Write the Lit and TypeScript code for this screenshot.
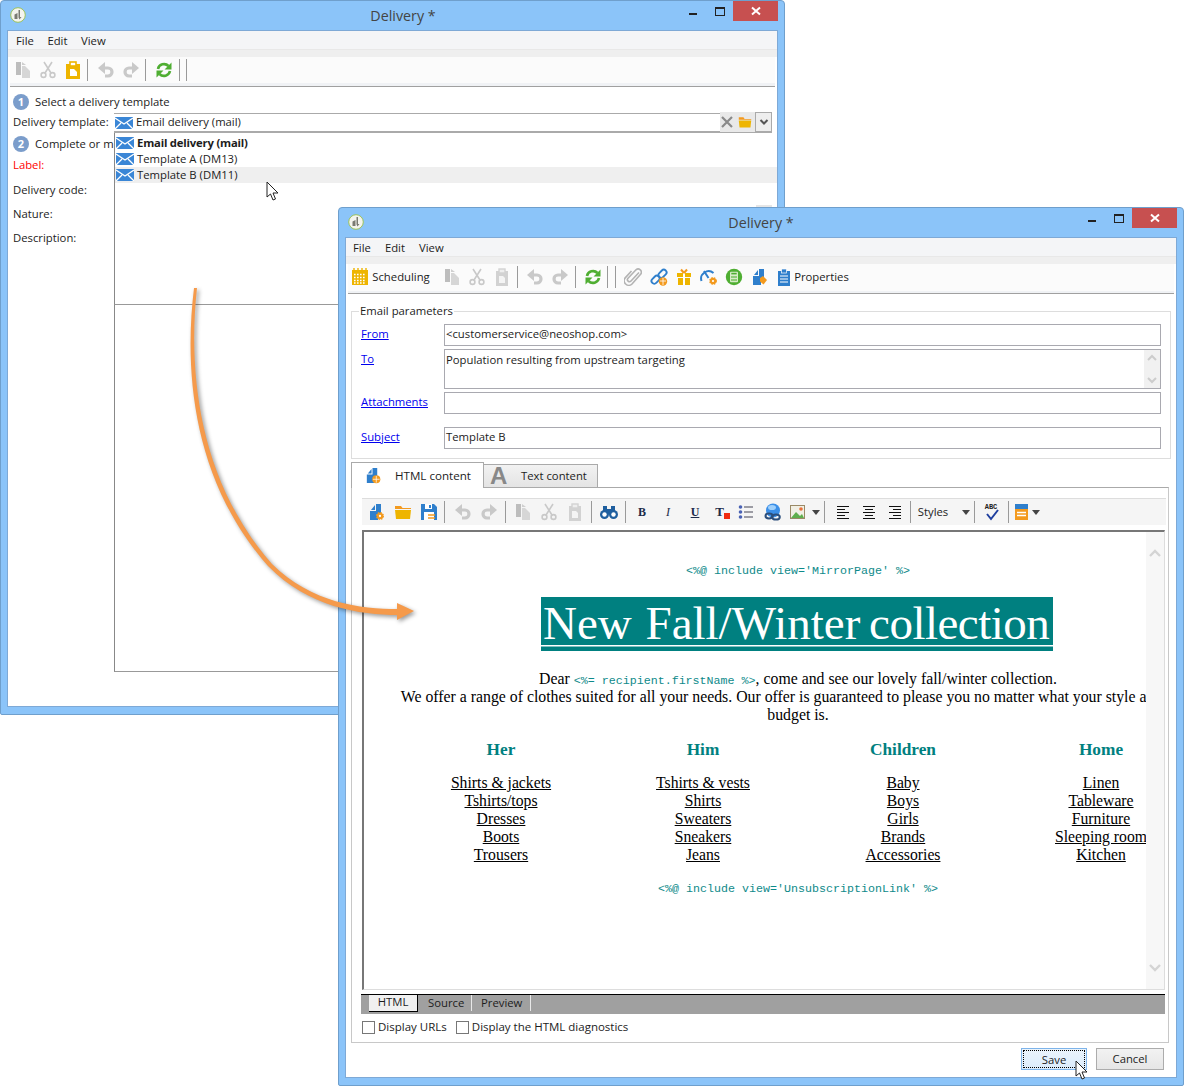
import { LitElement, html, svg, css } from 'lit';
import { customElement } from 'lit/decorators.js';

const BLUE = '#2f7fcc';
const ORANGE = '#f39a1e';
const YELLOW = '#eeb500';
const DIS = '#c9c9c9';

const gear = (x: number, y: number, r: number) => svg`
  <circle cx=${x} cy=${y} r=${r} fill=${ORANGE} stroke=${ORANGE} stroke-width="1.4" stroke-dasharray="1.4 1.2"/>
  <circle cx=${x} cy=${y} r=${r * 0.35} fill="#fff"/>`;
const docBlue = svg`<path d="M4 7l4-5v5zM9 1h5v10h-3v6H3V8h6z" fill=${BLUE}/>`;

const ICONS: Record<string, unknown> = {
  copy: svg`<path d="M2 1h5v13H2z" fill="#bdbdbd"/><path d="M8 5h3l5 5v7H8z" fill="#d6d6d6"/><path d="M8 1l4 3H8z" fill="#cfcfcf"/>`,
  cut: svg`<g fill="none" stroke=${DIS} stroke-width="1.6"><circle cx="4.5" cy="14" r="2.4"/><circle cx="13.5" cy="14" r="2.4"/><path d="M6 12L13 1M12 12L5 1"/></g>`,
  paste: svg`<rect x="2" y="3" width="14" height="15" fill=${YELLOW}/><rect x="6" y="1" width="6" height="4" fill="#fff" stroke=${YELLOW} stroke-width="1.6"/><path d="M6 8h4l3 3v4H6z" fill="#fff"/>`,
  pasteOff: svg`<rect x="3" y="3" width="12" height="15" fill="#d2d2d2"/><rect x="6" y="1" width="6" height="4" fill="#eee" stroke="#d2d2d2" stroke-width="1.4"/><path d="M6 8h4l2 2v5H6z" fill="#f4f4f4"/>`,
  undo: svg`<path d="M4 7h7a4 4 0 0 1 0 8H8" fill="none" stroke=${DIS} stroke-width="3.2"/><path d="M8 1L1 7L8 13z" fill=${DIS}/>`,
  redo: svg`<g transform="matrix(-1 0 0 1 18 0)"><path d="M4 7h7a4 4 0 0 1 0 8H8" fill="none" stroke=${DIS} stroke-width="3.2"/><path d="M8 1L1 7L8 13z" fill=${DIS}/></g>`,
  refresh: svg`<g fill="none" stroke="#4fae32" stroke-width="2.6"><path d="M3 8a6.2 6.2 0 0 1 10.5-3"/><path d="M15 10a6.2 6.2 0 0 1-10.5 3"/></g><path d="M16.5 1.5v7h-7zM1.5 16.5v-7h7z" fill="#4fae32"/>`,
  cal: svg`<rect x="1" y="2" width="16" height="15" fill=${YELLOW}/><path d="M3 0v4M7 0v4M11 0v4M15 0v4" stroke=${YELLOW} stroke-width="1.4"/><path d="M3 6.5h12M3 9.5h12M3 12.5h12M3 15h12" stroke="#fff" stroke-width="1.5" stroke-dasharray="1.6 1.4"/>`,
  clip: svg`<path d="M15 4.5L7 13a2 2 0 0 1-3-2.8l8-8.4a3.2 3.2 0 0 1 4.6 4.4L8 16a4.6 4.6 0 0 1-6.6-6.4L7.5 3" fill="none" stroke="#b3b3b3" stroke-width="1.6"/>`,
  link: svg`<g fill="none" stroke=${BLUE} stroke-width="1.9"><rect x="1" y="9" width="9" height="5.5" rx="2.7" transform="rotate(-45 5.5 11.7)"/><rect x="8" y="3" width="9" height="5.5" rx="2.7" transform="rotate(-45 12.5 5.7)"/></g><circle cx="13" cy="13.5" r="4.2" fill=${ORANGE}/><path d="M10 13h6M13 10v7" stroke="#fff" stroke-width=".8"/>`,
  gift: svg`<rect x="2" y="5" width="14" height="4" fill=${YELLOW}/><rect x="3" y="10" width="12" height="7" fill=${YELLOW}/><rect x="8" y="5" width="2" height="12" fill="#fff"/><path d="M9 5L6 1.5M9 5l3-3.5" stroke=${ORANGE} stroke-width="2"/>`,
  gauge: svg`<path d="M1.500 13a7.500 7.500 0 0 1 12-8" fill="none" stroke=${BLUE} stroke-width="2"/><path d="M4 3l4.500 7" stroke=${BLUE} stroke-width="2"/>${gear(13, 13, 3.2)}`,
  calc: svg`<circle cx="9" cy="9" r="8.2" fill="#4fae32"/><rect x="5" y="3.8" width="8" height="10.4" rx="1" fill="#d8ecc8"/><path d="M6.3 5.6h5.4" stroke="#4fae32" stroke-width="1.6"/><path d="M6.3 9h5.4M6.3 12h5.4" stroke="#4fae32" stroke-width="1.4" stroke-dasharray="1.4 .6"/>`,
  docTag: svg`${docBlue}<path d="M10 10l3-2 4 4-3.500 4.500-3.500-3z" fill=${ORANGE}/>`,
  props: svg`<rect x="3" y="3" width="12" height="15" fill=${BLUE}/><rect x="6.500" y="1" width="5" height="4" fill=${BLUE} stroke="#fff" stroke-width=".7"/><path d="M5 8h8M5 11h8M5 14h8" stroke="#fff" stroke-width="1.2"/>`,
  docGear: svg`${docBlue}${gear(13, 13, 3.3)}`,
  docGlobe: svg`${docBlue}<circle cx="13" cy="13" r="4.3" fill=${ORANGE}/><path d="M9.500 13h7M13 9.500v7" stroke="#fff" stroke-width=".8"/>`,
  folder: svg`<path d="M1 3h6l1.500 2H17v1H1z" fill=${ORANGE}/><path d="M1 7h16l-1 9H2z" fill=${YELLOW}/>`,
  save: svg`<path d="M1 1h13l3 3v13H1z" fill=${BLUE}/><rect x="5" y="1" width="7" height="5" fill="#fff"/><rect x="9" y="2" width="2" height="3" fill=${BLUE}/><rect x="4" y="9" width="10" height="8" fill="#fff"/><path d="M8 12h7M8 15h7" stroke=${ORANGE} stroke-width="1.6"/>`,
  binoc: svg`<g fill="#1f5f9f"><circle cx="4.500" cy="11.500" r="4.500"/><circle cx="13.500" cy="11.500" r="4.500"/><path d="M3 3h4v6H3zM11 3h4v6h-4zM7 6h4v5H7z"/></g><circle cx="4.500" cy="11.500" r="2.200" fill="#fff"/><circle cx="13.500" cy="11.500" r="2.200" fill="#fff"/>`,
  list: svg`<g fill="#4a62b4"><circle cx="3.500" cy="4" r="1.800"/><circle cx="3.500" cy="9" r="1.800"/><circle cx="3.500" cy="14" r="1.800"/></g><path d="M7 4h9M7 9h9M7 14h9" stroke="#445" stroke-width="1.200"/>`,
  globe: svg`<circle cx="9" cy="7.500" r="7" fill="#3b8fe8"/><ellipse cx="8" cy="4.500" rx="4" ry="2.500" fill="#9fd0fb"/><g fill="none" stroke="#2c4f7c" stroke-width="2"><ellipse cx="5" cy="13" rx="3.500" ry="2.400"/><ellipse cx="12" cy="14" rx="3.800" ry="2.600"/></g>`,
  image: svg`<rect x="1.500" y="2.500" width="14" height="13" fill="#f1efe4" stroke="#9a8a66"/><path d="M2 15l5-6 4 4 2-2 2 4z" fill="#5fae4c"/><circle cx="12" cy="6" r="1.800" fill="#e8703a"/>`,
  alignL: svg`<path d="M3 3.500h12M3 6.500h8M3 9.500h12M3 12.500h8M3 15.500h12" stroke="#111" stroke-width="1"/>`,
  alignC: svg`<path d="M3 3.500h12M5 6.500h8M3 9.500h12M5 12.500h8M3 15.500h12" stroke="#111" stroke-width="1"/>`,
  alignR: svg`<path d="M3 3.500h12M7 6.500h8M3 9.500h12M7 12.500h8M3 15.500h12" stroke="#111" stroke-width="1"/>`,
  check: svg`<path d="M5 11l4 5 7-9" fill="none" stroke="#1f3f9f" stroke-width="2"/>`,
  block: svg`<rect x="1" y="1" width="13" height="5" fill=${BLUE}/><rect x="1" y="6" width="13" height="11" fill=${ORANGE}/><path d="M3 9.500h9M3 12.500h9" stroke="#fff" stroke-width="1.300"/>`,
};

type Item = [string, number, number?];

const LINKS = [
  { title: 'Her', items: ['Shirts & jackets', 'Tshirts/tops', 'Dresses', 'Boots', 'Trousers'] },
  { title: 'Him', items: ['Tshirts & vests', 'Shirts', 'Sweaters', 'Sneakers', 'Jeans'] },
  { title: 'Children', items: ['Baby', 'Boys', 'Girls', 'Brands', 'Accessories'] },
  { title: 'Home', items: ['Linen', 'Tableware', 'Furniture', 'Sleeping room', 'Kitchen'] },
];

const TOOLBAR_1: Item[] = [
  ['copy', 23], ['cut', 48], ['paste', 73], ['sep', 87], ['undo', 106], ['redo', 131],
  ['sep', 145], ['refresh', 164], ['sep', 179], ['sep', 186],
];
const TOOLBAR_2: Item[] = [
  ['cal', 360], ['t:Scheduling', 401, 62], ['copy', 452], ['cut', 477], ['pasteOff', 502], ['sep', 517],
  ['undo', 535], ['redo', 560], ['sep', 575], ['refresh', 593], ['sep', 607], ['sep', 615],
  ['clip', 633], ['link', 659], ['gift', 684], ['gauge', 709], ['calc', 734], ['docTag', 759], ['props', 784],
  ['t:Properties', 821.500, 56],
];
const TOOLBAR_3: Item[] = [
  ['docGear', 376], ['folder', 403], ['save', 429], ['sep', 444], ['undo', 463], ['redo', 489], ['sep', 505],
  ['copy', 523], ['cut', 549], ['pasteOff', 575], ['sep', 591], ['binoc', 609], ['sep', 625],
  ['b:B', 642], ['i:I', 668], ['u:U', 695], ['r:T', 721], ['list', 746], ['globe', 773], ['image', 798],
  ['arrow', 816, 9], ['sep', 824], ['alignL', 843], ['alignC', 869], ['alignR', 895], ['sep', 910],
  ['t:Styles', 933, 32], ['arrow', 966, 9], ['sep', 974], ['a:ABC', 991], ['sep', 1008], ['block', 1023], ['arrow', 1036, 9],
];

@customElement('app-root')
export class AppRoot extends LitElement {
  // toolbar items sit on known centres, so the gap before each is worked out from the data
  private bar(start: number, items: Item[]) {
    let edge = start;
    return items.map(([key, centre, width]) => {
      const w = key === 'sep' ? 1 : width ?? 18;
      const gap = centre - w / 2 - edge;
      edge = centre + w / 2;
      const [kind, label] = key.split(':');
      let body: unknown;
      if (key === 'sep') body = html`<i class="sep"></i>`;
      else if (key === 'arrow') body = html`<i class="tri"></i>`;
      else if (label && kind === 't') body = html`<span class="tool-text">${label}</span>`;
      else if (label && kind === 'a') body = html`<span class="abc">${label}</span><svg class="ic" viewBox="0 0 18 18" width="18" height="18">${ICONS.check}</svg>`;
      else if (label) body = html`<span class="fmt ${kind}">${label}</span>`;
      else body = this.icon(key);
      return html`<span class="tool" style="margin-left:${gap}px;width:${w}px">${body}</span>`;
    });
  }

  private icon(name: string, size = 18) {
    return html`<svg class="ic" viewBox="0 0 18 18" width=${size} height=${size}>${ICONS[name]}</svg>`;
  }

  private logo() {
    return html`<svg class="logo" viewBox="0 0 16 16" width="16" height="16">
      <circle cx="8" cy="8" r="7.300" fill="#f4f4ee" stroke="#9cc25a"/>
      <path d="M4.500 12V7.500l3-1.500v6zM8.500 3H10v7h1.500L9.500 12.500l-1-2z" fill="#7a7a72"/>
    </svg>`;
  }

  private mail() {
    return html`<svg class="mail" viewBox="0 0 18 12" width="18" height="12">
      <rect width="18" height="12" fill="#3a86d6"/>
      <path d="M0 1l9 6 9-6M0 12l6-6M18 12l-6-6" fill="none" stroke="#fff" stroke-width="1.300"/>
    </svg>`;
  }

  private caption() {
    return html`<header class="title">
      ${this.logo()}
      <span class="caption">Delivery *</span>
      <span class="min"></span><span class="max"></span>
      <span class="close"><svg viewBox="0 0 10 10" width="10" height="10"><path d="M1 1.500l8 7M9 1.500l-8 7" stroke="#fff" stroke-width="2"/></svg></span>
    </header>`;
  }

  private menu() {
    return html`<nav class="menu"><span>File</span><span>Edit</span><span>View</span></nav><div class="stripe"></div>`;
  }

  private cursor(cls: string) {
    return html`<svg class="cursor ${cls}" viewBox="0 0 13 20" width="13" height="20">
      <path d="M1 1v15l3.500-3 2.500 6 2.500-1-2.500-6h5z" fill="#fff" stroke="#222" stroke-width="1"/>
    </svg>`;
  }

  private firstWindow() {
    return html`<section class="win first">
      ${this.caption()}
      <div class="client">
        ${this.menu()}
        <div class="toolbar">${this.bar(10, TOOLBAR_1)}</div>
        <div class="rule"></div>
        <div class="body">
          <div class="step"><b>1</b>Select a delivery template</div>
          <div class="tpl-row">
            <label>Delivery template:</label>
            <div class="combo">
              ${this.mail()}<span class="combo-text">Email delivery (mail)</span>
              <span class="combo-tools">
                <svg viewBox="0 0 14 14" width="14" height="14"><path d="M2 2l10 10M12 2L2 12" stroke="#8a8a8a" stroke-width="2.200"/></svg>
                ${this.icon('folder', 14)}
              </span>
              <span class="combo-btn"><svg viewBox="0 0 10 8" width="10" height="8"><path d="M1.500 2l3.500 3.500L8.500 2" fill="none" stroke="#555" stroke-width="2"/></svg></span>
            </div>
          </div>
          <div class="step second"><b>2</b>Complete or m</div>
          <div class="lbl red">Label:</div>
          <div class="lbl code">Delivery code:</div>
          <div class="lbl next">Nature:</div>
          <div class="lbl next">Description:</div>
          <div class="drop">
            <div class="opt strong">${this.mail()}Email delivery (mail)</div>
            <div class="opt">${this.mail()}Template A (DM13)</div>
            <div class="opt hover">${this.mail()}Template B (DM11)</div>
          </div>
          <div class="pane"></div>
        </div>
      </div>
    </section>`;
  }

  private secondWindow() {
    return html`<section class="win second-win">
      ${this.caption()}
      <div class="client">
        ${this.menu()}
        <div class="toolbar tall">${this.bar(348, TOOLBAR_2)}</div>
        <div class="rule"></div>
        <div class="sheet">
          <fieldset class="params">
            <legend>Email parameters</legend>
            <div class="field from"><a>From</a><div class="input">&lt;customerservice@neoshop.com&gt;</div></div>
            <div class="field to"><a>To</a><div class="input area">Population resulting from upstream targeting
              <span class="mini-scroll">
                <svg viewBox="0 0 12 8" width="12" height="8"><path d="M2 6l4-4 4 4" fill="none" stroke="#ccc" stroke-width="2"/></svg>
                <svg viewBox="0 0 12 8" width="12" height="8"><path d="M2 2l4 4 4-4" fill="none" stroke="#ccc" stroke-width="2"/></svg>
              </span></div></div>
            <div class="field attach"><a>Attachments</a><div class="input"></div></div>
            <div class="field subject"><a>Subject</a><div class="input">Template B</div></div>
          </fieldset>
          <div class="tabs">
            <div class="tab on">${this.icon('docGlobe', 17)}<span>HTML content</span></div>
            <div class="tab off"><span class="big-a">A</span><span>Text content</span></div>
          </div>
          <div class="panel">
            <div class="edit-bar">${this.bar(362, TOOLBAR_3)}</div>
            <div class="editor">
              <div class="doc">
                <div class="tag mirror">&lt;%@ include view='MirrorPage' %&gt;</div>
                <h1><span>New Fall/Winter<i> </i><em>collection</em></span></h1>
                <p>Dear <code>&lt;%= recipient.firstName %&gt;</code>, come and see our lovely fall/winter collection.<br />
                We offer a range of clothes suited for all your needs. Our offer is guaranteed to please you no matter what your style and your<br />
                budget is.</p>
                <div class="cols">
                  ${LINKS.map(c => html`<div class="col"><h2>${c.title}</h2>${c.items.map(i => html`<u>${i}</u>`)}</div>`)}
                </div>
                <div class="tag unsub">&lt;%@ include view='UnsubscriptionLink' %&gt;</div>
              </div>
              <div class="scroll">
                <svg viewBox="0 0 14 10" width="14" height="10"><path d="M2 8l5-5 5 5" fill="none" stroke="#d4d4d4" stroke-width="2.400"/></svg>
                <svg viewBox="0 0 14 10" width="14" height="10"><path d="M2 2l5 5 5-5" fill="none" stroke="#d4d4d4" stroke-width="2.400"/></svg>
              </div>
            </div>
            <div class="mode-bar">
              <span class="mode on">HTML</span><span class="mode src">Source</span><span class="mode prev">Preview</span>
            </div>
            <div class="checks">
              <label><i></i>Display URLs</label>
              <label><i></i>Display the HTML diagnostics</label>
            </div>
          </div>
          <div class="actions">
            <button class="save"><span>Save</span></button>
            <button class="cancel">Cancel</button>
          </div>
        </div>
      </div>
    </section>`;
  }

  render() {
    return html`
      ${this.firstWindow()}
      ${this.cursor('c1')}
      ${this.secondWindow()}
      <svg class="swoosh" viewBox="0 0 1184 1087" width="1184" height="1087">
        <path d="M194 288C184 370 192 480 268 566C308 607 360 615 398 615L398 609C360 609 312 603 272 564C198 480 188 370 197 288Z" fill="#f59a4b"/>
        <path d="M397 603L414 611L397 620Z" fill="#f59a4b"/>
      </svg>
      ${this.cursor('c2')}
    `;
  }

  static styles = css`
    :host {
      display: block;
      position: relative;
      width: 1184px;
      height: 1087px;
      overflow: hidden;
      background: #fff;
      font-family: "Open Sans", "Noto Sans", sans-serif;
      font-size: 11.3px;
      line-height: 16px;
      color: #1c1c1c;
    }
    .win {
      position: absolute;
      box-sizing: border-box;
      display: flex;
      flex-direction: column;
      background: #8bc4f9;
      border: 1px solid #6f9fcc;
      border-radius: 4px 4px 2px 2px;
      padding: 0 6px 7px;
    }
    .first { left: 0; top: 0; width: 785px; height: 715px; }
    .second-win { left: 338px; top: 207px; width: 846px; height: 879px; }
    .title {
      position: relative;
      height: 29px;
      flex: none;
      display: flex;
      align-items: center;
      justify-content: center;
    }
    .first .title { padding-left: 21px; }
    .logo { position: absolute; left: 3px; top: 6px; }
    .caption { font-size: 14.3px; color: #444; }
    .min { position: absolute; right: 81px; top: 12px; width: 8px; height: 2px; background: #222; }
    .max { position: absolute; right: 53px; top: 6px; width: 8px; height: 6px; border: 1px solid #222; border-top-width: 2px; }
    .close {
      position: absolute;
      right: 0;
      top: 0;
      width: 45px;
      height: 20px;
      background: #c75050;
      display: flex;
      align-items: center;
      justify-content: center;
    }
    .client {
      flex: 1;
      min-height: 0;
      display: flex;
      flex-direction: column;
      background: #fff;
      border: 1px solid #7ea9d6;
    }
    .menu {
      height: 18px;
      flex: none;
      display: flex;
      align-items: center;
      background: #f4f5f7;
      padding: 1px 0 0 8px;
      gap: 13.5px;
      box-sizing: border-box;
    }
    .second-win .menu { padding-left: 7px; gap: 14px; }
    .stripe { height: 8px; flex: none; background: #efefef; border-top: 1px solid #e8e8e8; box-sizing: border-box; }
    .toolbar {
      height: 26px;
      flex: none;
      display: flex;
      align-items: center;
      margin: 0 2px;
      background: #fbfbfb;
    }
    .toolbar.tall { height: 27px; padding-bottom: 1px; box-sizing: border-box; }
    .tool { display: flex; flex: none; align-items: center; justify-content: center; height: 22px; white-space: nowrap; }
    .ic, .mail { flex: none; display: block; }
    .sep { display: block; width: 1px; height: 22px; background: #9a9a9a; flex: none; }
    .tri { width: 0; height: 0; border: 4.5px solid transparent; border-top: 5px solid #444; border-bottom: 0; }
    .fmt { font: bold 12px "Liberation Serif", serif; color: #1c2b4a; }
    .fmt.i { font-style: italic; font-weight: normal; }
    .fmt.u { text-decoration: underline; }
    .fmt.r { position: relative; font-size: 13px; padding-right: 3px; }
    .fmt.r::after { content: ""; position: absolute; right: -3px; bottom: 1px; width: 6px; height: 6px; background: #f02c10; }
    .abc { position: absolute; font: bold 7px "Liberation Mono", monospace; margin-top: -10px; color: #222; }
    .rule { flex: none; height: 4px; box-sizing: border-box; background: #f0f2f5; border-bottom: 1px solid #a0a0a0; margin: 0 2px; }
    .second-win .rule { height: 3px; }
    .body { position: relative; flex: 1; padding: 6px 0 0 5px; overflow: hidden; }
    .step { display: flex; align-items: center; height: 18px; white-space: nowrap; }
    .step b {
      width: 16px;
      height: 16px;
      flex: none;
      margin-right: 6px;
      border-radius: 50%;
      background: #7b9dcb;
      color: #fff;
      font-size: 11px;
      line-height: 16px;
      text-align: center;
    }
    .step.second { margin-top: 2px; }
    .tpl-row { display: flex; align-items: center; height: 20px; margin-top: 2px; }
    .tpl-row label { width: 101px; flex: none; padding-bottom: 2px; }
    .combo {
      flex: 1;
      height: 20px;
      margin-right: 5px;
      box-sizing: border-box;
      display: flex;
      align-items: center;
      border-top: 1px solid #aaa;
      border-bottom: 2px solid #aaa;
      padding-left: 1px;
    }
    .combo-text { margin-left: 3px; flex: 1; padding-bottom: 1px; }
    .combo-tools {
      width: 35px;
      height: 20px;
      display: flex;
      align-items: center;
      justify-content: space-between;
      padding: 0 3px 0 0;
      box-sizing: border-box;
      background: #e9e9e9;
      margin-top: -1px;
    }
    .combo-btn {
      width: 17px;
      height: 20px;
      box-sizing: border-box;
      display: flex;
      align-items: center;
      justify-content: center;
      background: #eee;
      border: 1px solid #aaa;
      margin-top: -1px;
    }
    .lbl { height: 16px; }
    .red { color: #f00; margin-top: 4px; }
    .code { margin-top: 9px; }
    .next { margin-top: 8px; }
    .drop {
      position: absolute;
      left: 106px;
      top: 46px;
      right: 0;
      height: 172px;
      box-sizing: border-box;
      padding-top: 2px;
      background: #fff;
      border-left: 1px solid #888;
      border-bottom: 1px solid #999;
    }
    .drop::after {
      content: "";
      position: absolute;
      right: 5px;
      top: 72px;
      width: 16px;
      height: 10px;
      background: #e6e6e6;
    }
    .opt { display: flex; align-items: center; height: 16px; padding-left: 1px; gap: 3px; }
    .strong { font-weight: 700; letter-spacing: -.2px; }
    .hover { background: #efefef; }
    .pane {
      position: absolute;
      left: 106px;
      top: 218px;
      right: 3px;
      height: 367px;
      box-sizing: border-box;
      border-left: 1px solid #888;
      border-bottom: 1px solid #999;
    }
    .sheet { flex: 1; display: flex; flex-direction: column; padding: 0 5px; position: relative; min-height: 0; }
    .params {
      margin: 11px 0 0;
      padding: 0 9px 9px;
      height: 154px;
      box-sizing: border-box;
      border: 1px solid #ddd;
      min-width: 0;
      flex: none;
    }
    .params legend { padding: 0 1px; margin-left: -2px; line-height: 12px; }
    .field { display: grid; grid-template-columns: 83px 1fr; }
    .field a { color: #00e; text-decoration: underline; align-self: center; margin-bottom: 2px; }
    .from { margin-top: 7px; }
    .to { margin-top: 3px; }
    .to a { align-self: start; margin: 2px 0 0; }
    .attach { margin-top: 3px; }
    .subject { margin-top: 13px; }
    .input {
      position: relative;
      height: 22px;
      box-sizing: border-box;
      border: 1px solid #a9a9b0;
      padding: 1px;
      line-height: 16px;
    }
    .input.area { height: 40px; padding-top: 2px; }
    .mini-scroll {
      position: absolute;
      right: 0;
      top: 0;
      bottom: 0;
      width: 16px;
      background: #f1f1f1;
      display: flex;
      flex-direction: column;
      align-items: center;
      justify-content: space-between;
      padding: 4px 0;
      box-sizing: border-box;
    }
    .tabs { display: flex; align-items: flex-end; height: 25px; margin-top: 3px; position: relative; z-index: 1; flex: none; }
    .tab { display: flex; align-items: center; box-sizing: border-box; border: 1px solid #aaa; border-bottom: 0; }
    .tab.on { width: 133px; height: 26px; background: #fff; padding-left: 12px; gap: 14px; margin-bottom: -1px; font-size: 11.6px; }
    .tab.off {
      width: 114px;
      height: 24px;
      background: linear-gradient(#f2f2f2, #e4e4e4);
      border-left: 0;
      padding-left: 6px;
      gap: 13px;
      border-bottom: 1px solid #aaa;
      margin-bottom: -1px;
    }
    .big-a { font: bold 24px/24px "Liberation Sans", sans-serif; color: #888; width: 18px; }
    .panel {
      width: 818px;
      height: 556px;
      box-sizing: border-box;
      flex: none;
      border: 1px solid #c8c8c8;
      border-top-color: #aaa;
      padding: 10px 2px 0 10px;
      display: flex;
      flex-direction: column;
    }
    .edit-bar {
      height: 27px;
      box-sizing: border-box;
      flex: none;
      display: flex;
      align-items: center;
      background: #f5f5f5;
      border-top: 1px solid #ddd;
    }
    .editor {
      display: flex;
      height: 460px;
      margin-top: 5px;
      flex: none;
      box-sizing: border-box;
      width: 803px;
      border: 1px solid #ddd;
      border-top: 2px solid #777;
      border-left: 2px solid #777;
      overflow: hidden;
    }
    .doc {
      flex: none;
      width: 782px;
      overflow: hidden;
      color: #000;
      font-family: "Liberation Serif", serif;
      font-size: 15.7px;
      line-height: 18px;
    }
    .doc > * { width: 868px; text-align: center; white-space: nowrap; }
    .tag, .doc code {
      font: 11.67px/14px "Liberation Mono", monospace;
      color: #0e8a8a;
    }
    .mirror { margin-top: 32px; }
    .doc h1 { margin: 19px 0 0; height: 54px; font-weight: normal; }
    .doc h1 span {
      display: inline-block;
      box-sizing: border-box;
      width: 512px;
      height: 54px;
      margin-right: 2px;
      padding-left: 2px;
      background: linear-gradient(#fff, #fff) 0 48px / 100% 1.5px no-repeat, #008080;
      color: #fff;
      font-size: 47px;
      line-height: 52px;
      word-spacing: 2px;
      text-align: left;
    }
    .doc h1 i { word-spacing: -3px; font-style: normal; }
    .doc h1 em { font-style: normal; letter-spacing: -.5px; }
    .doc p { margin: 19px 0 0; font-size: 15.8px; }
    .cols { display: grid; grid-template-columns: 202px 202px 198px 198px; margin: 0 0 0 36px; }
    .col { display: flex; flex-direction: column; align-items: center; }
    .col h2 { margin: 16px 0 14px; font-size: 17.3px; line-height: 20px; color: #008080; }
    .unsub { margin-top: 18px; }
    .scroll {
      width: 18px;
      flex: none;
      background: #f7f7f7;
      display: flex;
      flex-direction: column;
      align-items: center;
      justify-content: space-between;
      padding: 16px 0 16px;
      box-sizing: border-box;
    }
    .mode-bar {
      width: 804px;
      height: 20px;
      margin-top: 4px;
      margin-left: -1px;
      flex: none;
      display: flex;
      background: #a0a0a0;
      border-top: 1px solid #000;
      box-sizing: border-box;
      padding-left: 8px;
    }
    .mode { height: 16px; line-height: 16px; border-right: 1px solid #e8e8e8; }
    .mode.on { width: 48px; background: #f0f0f0; text-align: center; border-right: 1px solid #000; border-bottom: 1px solid #000; line-height: 13px; }
    .mode.src { padding-left: 10px; width: 43px; }
    .mode.prev { padding-left: 9px; width: 49px; }
    .checks { display: flex; gap: 9px; margin-top: 5px; height: 16px; font-size: 11.5px; }
    .checks label { display: flex; align-items: center; gap: 3px; }
    .checks i { display: block; width: 13px; height: 13px; box-sizing: border-box; border: 1px solid #777; background: #fff; }
    .actions { display: flex; gap: 9px; justify-content: flex-end; margin: 5px 7px 0 0; flex: none; }
    button {
      height: 22px;
      padding: 0;
      font: inherit;
      color: #1c1c1c;
      box-sizing: border-box;
    }
    .save { width: 66px; background: linear-gradient(#ebf4fc, #dcecfc); border: 1px solid #7eb4ea; padding: 1px; }
    .save span { display: block; height: 18px; line-height: 17px; border: 1px dotted #000; box-sizing: border-box; }
    .cancel { width: 68px; background: linear-gradient(#f2f2f2, #e6e6e6); border: 1px solid #acacac; }
    .swoosh {
      position: absolute;
      left: 0;
      top: 0;
      pointer-events: none;
      filter: drop-shadow(2px 2px 2px rgba(0, 0, 0, .4));
    }
    .cursor { position: absolute; }
    .c1 { left: 266px; top: 181px; }
    .c2 { left: 1075px; top: 1060px; }
  `;
}
